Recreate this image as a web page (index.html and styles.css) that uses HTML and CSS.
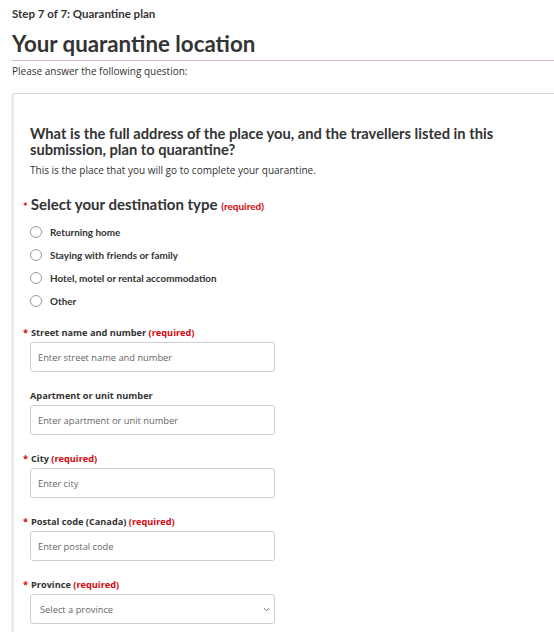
FILE: index.html
```html
<!DOCTYPE html>
<html lang="en">
<head>
<meta charset="utf-8">
<title>Your quarantine location</title>
<link rel="stylesheet" href="styles.css">
</head>
<body>
<div class="page">
  <p class="step">Step 7 of 7: Quarantine plan</p>
  <h1 class="title">Your quarantine location</h1>
  <p class="intro">Please answer the following question:</p>
  <section class="card">
    <h2 class="question">What is the full address of the place you, and the travellers listed in this submission, plan to quarantine?</h2>
    <p class="hint">This is the place that you will go to complete your quarantine.</p>
    <div class="group">
      <div class="legend"><span class="star">*</span>Select your destination type <span class="req">(required)</span></div>
      <label class="radio"><span class="circle"></span>Returning home</label>
      <label class="radio"><span class="circle"></span>Staying with friends or family</label>
      <label class="radio"><span class="circle"></span>Hotel, motel or rental accommodation</label>
      <label class="radio"><span class="circle"></span>Other</label>
    </div>
    <div class="field">
      <div class="label"><span class="star-s">*</span>Street name and number <span class="req-s">(required)</span></div>
      <div class="input">Enter street name and number</div>
    </div>
    <div class="field">
      <div class="label plain">Apartment or unit number</div>
      <div class="input">Enter apartment or unit number</div>
    </div>
    <div class="field">
      <div class="label"><span class="star-s">*</span>City <span class="req-s">(required)</span></div>
      <div class="input">Enter city</div>
    </div>
    <div class="field">
      <div class="label"><span class="star-s">*</span>Postal code (Canada) <span class="req-s">(required)</span></div>
      <div class="input">Enter postal code</div>
    </div>
    <div class="field">
      <div class="label"><span class="star-s">*</span>Province <span class="req-s">(required)</span></div>
      <div class="input select"><span class="sel-text">Select a province</span>
        <svg class="chev" width="7" height="5" viewBox="0 0 7 5"><path d="M1 1.2 L3.5 3.7 L6 1.2" fill="none" stroke="#666" stroke-width="1"/></svg>
      </div>
    </div>
  </section>
</div>
</body>
</html>
```

FILE: styles.css
```css
* { box-sizing: border-box; }
html, body { margin: 0; padding: 0; background: #fff; }
body { color: #333; font-family: "Open Sans", "Noto Sans", sans-serif; }
.page { padding: 6px 0 0 12px; }
.step { margin: 0; font-family: Lato, sans-serif; font-weight: 700; font-size: 11.5px; line-height: 16px; color: #333; }
.title {
  margin: 8px 0 0 0;
  font-family: Lato, sans-serif;
  font-weight: 700;
  font-size: 22.3px;
  line-height: 28px;
  color: #333;
  padding-bottom: 2px;
  border-bottom: 1px solid #e6b6ba;
}
.intro { margin: 3px 0 0 0; font-size: 10px; line-height: 14px; color: #333; }
.card {
  margin-top: 15px;
  margin-left: -1px;
  border-top: 1px solid #d6d6d6;
  border-left: 3px solid #ececec;
  border-top-left-radius: 3px;
  padding: 31px 0 20px 16px;
}
.question {
  margin: 0;
  font-family: Lato, sans-serif;
  font-weight: 700;
  font-size: 14.7px;
  line-height: 16px;
  color: #333;
}
.hint { margin: 6px 0 0 0; font-size: 10px; line-height: 14px; color: #333; }
.group { margin: 17px 0 0 0; padding: 0; }
.legend {
  margin-left: -7px;
  font-family: Lato, sans-serif; font-weight: 700; font-size: 15px; line-height: 20px; color: #333;
}
.star { color: #d3080c; font-size: 11px; margin-right: 3px; vertical-align: -1px; }
.req { color: #d3080c; font-size: 10px; }
.radio {
  display: flex; align-items: center; gap: 8px;
  height: 23px;
  font-family: Lato, sans-serif; font-weight: 700; font-size: 9.9px; color: #333;
}
.legend + .radio { margin-top: 3px; }
.circle {
  width: 12px; height: 12px; border-radius: 50%;
  border: 1px solid #999; background: #fff; flex: none;
}
.field { margin-top: 17px; }
.group + .field { margin-top: 14px; }
.label {
  margin-left: -7px;
  font-weight: 700; font-size: 9.2px; line-height: 14px; color: #333;
}
.label.plain { margin-left: 0; }
.star-s { color: #d3080c; margin-right: 3px; }
.req-s { color: #d3080c; }
.input {
  margin-top: 2px;
  width: 245px; height: 30px;
  border: 1px solid #cfcfcf; border-radius: 3px;
  padding: 0 7px;
  display: flex; align-items: center;
  font-size: 9.3px; color: #666;
}
.select { justify-content: space-between; padding-left: 9px; padding-right: 4px; }
```
